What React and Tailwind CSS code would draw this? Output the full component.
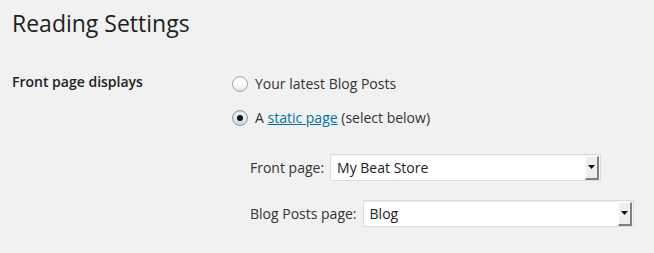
export default function App() {
  return (
    <div className="min-h-screen bg-[#f1f1f1] bg-[radial-gradient(#e6e6e6_0.6px,transparent_0.6px)] bg-[length:4px_4px] font-['Open_Sans',sans-serif] text-[#222]">
      <h2 className="pl-[12px] pt-[9px] text-[23px] leading-[29px] text-[#222]">Reading Settings</h2>

      <div className="mt-[32px] flex">
        <div className="w-[220px] pl-[12px] pt-[2px] text-[14px] font-semibold leading-[20px]">Front page displays</div>

        <div className="flex flex-col">
          <label className="flex h-[20px] items-center gap-[7px] pl-[12px] pt-[8px] text-[14px] leading-[20px]">
            <Radio />
            <span className="text-[#333]">Your latest Blog Posts</span>
          </label>
          <label className="mt-[14px] flex h-[20px] items-center gap-[7px] pl-[12px] pt-[8px] text-[14px] leading-[20px]">
            <Radio checked />
            <span className="text-[#333]">
              A{' '}
              <a href="#" className="text-[#0074a2] underline">
                static page
              </a>{' '}
              (select below)
            </span>
          </label>

          <div className="mt-[30px] flex flex-col gap-[19px] pl-[30px]">
            <div className="flex items-center gap-[6px]">
              <span className="text-[14px] text-[#333]">Front page:</span>
              <Select value="My Beat Store" />
            </div>
            <div className="flex items-center gap-[6px]">
              <span className="text-[14px] text-[#333]">Blog Posts page:</span>
              <Select value="Blog" />
            </div>
          </div>
        </div>
      </div>
    </div>
  );
}

function Radio({ checked }) {
  return (
    <span
      className={
        checked
          ? 'flex h-[16px] w-[16px] shrink-0 items-center justify-center rounded-full border border-[#7e9fb8] bg-[linear-gradient(#f4f9fd,#c5dcef)] shadow-[inset_0_1px_1px_rgba(0,0,0,0.15)]'
          : 'flex h-[16px] w-[16px] shrink-0 items-center justify-center rounded-full border border-[#a9a9a9] bg-[linear-gradient(#ffffff_45%,#e3e3e3)] shadow-[inset_0_1px_1px_rgba(0,0,0,0.08)]'
      }
    >
      {checked && <span className="h-[6px] w-[6px] rounded-full bg-[#111]" />}
    </span>
  );
}

function Select({ value }) {
  return (
    <div className="flex h-[27px] w-[271px] items-center border border-[#dcdcdc] bg-white pl-[6px] shadow-[inset_0_1px_2px_rgba(0,0,0,0.07)]">
      <span className="flex-1 text-[14px] text-[#222]">{value}</span>
      <span className="mr-[1px] flex h-[24px] w-[14px] items-center justify-center border-t border-l border-t-[#fff] border-l-[#fff] border-r-2 border-b-2 border-r-[#808080] border-b-[#808080] bg-[#eeeeee]">
        <svg width="7" height="4" viewBox="0 0 7 4">
          <path d="M0 0h7L3.5 4z" fill="#111" />
        </svg>
      </span>
    </div>
  );
}
